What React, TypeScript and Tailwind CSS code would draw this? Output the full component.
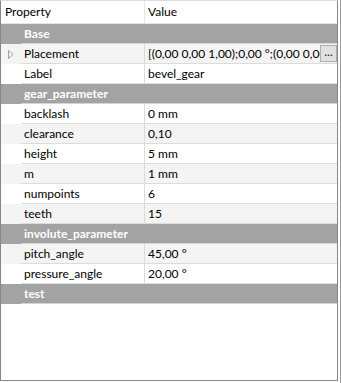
type Item =
  | { kind: "group"; label: string }
  | { kind: "prop"; label: string; value: string; expandable?: boolean; button?: boolean };

const ITEMS: Item[] = [
  { kind: "group", label: "Base" },
  {
    kind: "prop",
    label: "Placement",
    value: "[(0,00 0,00 1,00);0,00 °;(0,00 0,00 0,00)]",
    expandable: true,
    button: true,
  },
  { kind: "prop", label: "Label", value: "bevel_gear" },
  { kind: "group", label: "gear_parameter" },
  { kind: "prop", label: "backlash", value: "0 mm" },
  { kind: "prop", label: "clearance", value: "0,10" },
  { kind: "prop", label: "height", value: "5 mm" },
  { kind: "prop", label: "m", value: "1 mm" },
  { kind: "prop", label: "numpoints", value: "6" },
  { kind: "prop", label: "teeth", value: "15" },
  { kind: "group", label: "involute_parameter" },
  { kind: "prop", label: "pitch_angle", value: "45,00 °" },
  { kind: "prop", label: "pressure_angle", value: "20,00 °" },
  { kind: "group", label: "test" },
];

export default function App() {
  return (
    <div
      className="flex h-[383px] w-[341px] bg-white text-[12px] text-black"
      style={{ fontFamily: 'Lato, "Liberation Sans", sans-serif' }}
    >
      <div className="flex h-[381px] w-[338px] flex-col border border-t-[#dcdcdc] border-x-[#828790] border-b-[#828790]">
        {/* header */}
        <div className="grid h-[23px] shrink-0 grid-cols-[144px_1fr] border-b border-[#e5e5e5] bg-white">
          <div className="border-r border-[#e5e5e5] pl-[4px] leading-[22px]">Property</div>
          <div className="pl-[3px] leading-[22px]">Value</div>
        </div>

        {ITEMS.map((it, i) =>
          it.kind === "group" ? (
            <div key={i} className="grid h-[20px] shrink-0 grid-cols-[20px_1fr] bg-[#a3a3a3]">
              <div />
              <div className="border-b border-[#d4d4d4] pl-[3px] font-bold leading-[19px] text-white">
                {it.label}
              </div>
            </div>
          ) : (
            <div
              key={i}
              className={`grid h-[20px] shrink-0 grid-cols-[20px_124px_minmax(0,1fr)] ${
                i % 2 === 1 ? "bg-[#f4f4f4]" : "bg-white"
              }`}
            >
              <div className="flex items-center pl-[7px]">
                {it.expandable && (
                  <svg width="6" height="9" viewBox="0 0 6 9">
                    <path d="M0.5 0.5 L5 4.5 L0.5 8.5 Z" fill="none" stroke="#a0a0a0" />
                  </svg>
                )}
              </div>
              <div className="border-b border-r border-[#dcdcdc] pl-[3px] leading-[19px]">
                {it.label}
              </div>
              <div className="flex min-w-0 border-b border-[#dcdcdc]">
                <div className="min-w-0 flex-1 overflow-hidden whitespace-nowrap pl-[3px] leading-[19px]">
                  {it.value}
                </div>
                {it.button && (
                  <div className="mt-[1px] flex h-[17px] w-[17px] shrink-0 items-start justify-center border border-[#adadad] bg-[#e1e1e1] leading-[12px] text-[#3c0050]">
                    ...
                  </div>
                )}
              </div>
            </div>
          ),
        )}
      </div>
      <div className="ml-[2px] h-full w-px bg-[#9a9a9a]" />
    </div>
  );
}
